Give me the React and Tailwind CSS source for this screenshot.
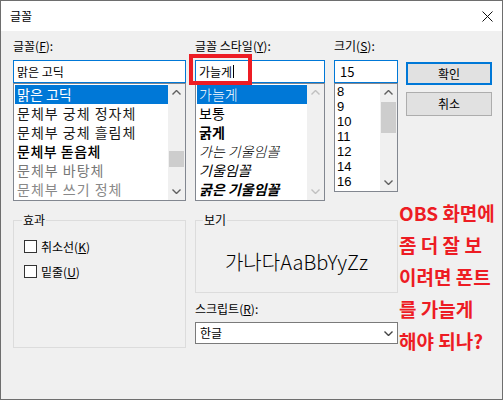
import React from 'react';

const font = { fontFamily: '"Noto Sans CJK KR", "Noto Sans", sans-serif' };

const Chevron = ({ dir = 'down', color = '#606060', w = 9, h = 5 }) => (
    <svg width={w} height={h} viewBox="0 0 9 5" fill="none">
        {dir === 'up' ? (
            <polyline points="0.5,4.5 4.5,0.5 8.5,4.5" stroke={color} strokeWidth="1.4" />
        ) : (
            <polyline points="0.5,0.5 4.5,4.5 8.5,0.5" stroke={color} strokeWidth="1.4" />
        )}
    </svg>
);

const ScrollBar = ({ thumbTop, thumbHeight, disabled }) => (
    <div className="w-[17px] flex flex-col bg-[#f0f0f0]">
        <div className="h-[17px] flex items-center justify-center">
            <Chevron dir="up" color={disabled ? '#c0c0c0' : '#606060'} />
        </div>
        <div className="flex-1 flex flex-col px-[1px]">
            {!disabled && (
                <div className="bg-[#cdcdcd]" style={{ marginTop: thumbTop, height: thumbHeight }} />
            )}
        </div>
        <div className="h-[17px] flex items-center justify-center">
            <Chevron dir="down" color={disabled ? '#c0c0c0' : '#606060'} />
        </div>
    </div>
);

const Label = ({ text, k, tail = ':' }) => (
    <div className="h-[15px] text-[12px] leading-[15px] text-black whitespace-nowrap">
        {text}(<span className="underline">{k}</span>){tail}
    </div>
);

const fontItems = [
    { t: '맑은 고딕', sel: true },
    { t: '문체부 궁체 정자체', c: 'text-[#1a1a1a] tracking-[1px]' },
    { t: '문체부 궁체 흘림체', c: 'text-[#1a1a1a] tracking-[1px]' },
    { t: '문체부 돋음체', c: 'text-black font-medium tracking-[0.5px]' },
    { t: '문체부 바탕체', c: 'text-[#777] tracking-[1px]' },
    { t: '문체부 쓰기 정체', c: 'text-[#888] tracking-[1px]' },
];

const styleItems = [
    { t: '가늘게', sel: true, c: 'font-light' },
    { t: '보통', c: '' },
    { t: '굵게', c: 'font-bold' },
    { t: '가는 기울임꼴', c: 'italic font-light' },
    { t: '기울임꼴', c: 'italic' },
    { t: '굵은 기울임꼴', c: 'italic font-bold' },
];

const sizes = ['8', '9', '10', '11', '12', '14', '16'];

export default function App() {
    return (
        <div className="w-[504px] h-[400px] bg-white" style={font}>
            <div className="relative w-[503px] h-[400px] border border-[#6e6e6e] flex flex-col bg-[#f0f0f0]">
                {/* title bar */}
                <div className="h-[30px] bg-white flex items-center justify-between pl-[9px] pr-[9px]">
                    <span className="text-[12px] text-black">글꼴</span>
                    <svg width="11" height="11" viewBox="0 0 11 11">
                        <path d="M0.5 0.5 L10.5 10.5 M10.5 0.5 L0.5 10.5" stroke="#111" strokeWidth="1" />
                    </svg>
                </div>

                <div className="flex-1 pl-[12px] pt-[7px]">
                    {/* top row */}
                    <div className="flex">
                        {/* font */}
                        <div className="w-[173px] flex flex-col">
                            <Label text="글꼴" k="F" />
                            <div className="mt-[7px] h-[23px] border border-[#0078d7] bg-white flex items-center pl-[3px] text-[12px] text-black">
                                맑은 고딕
                            </div>
                            <div className="h-[118px] border border-[#828790] bg-white flex">
                                <div className="flex-1 pl-[1px] pt-[1px] overflow-hidden">
                                    {fontItems.map(it => (
                                        <div
                                            key={it.t}
                                            className={`h-[19px] pl-[2px] text-[14px] leading-[19px] whitespace-nowrap ${it.sel ? 'bg-[#0078d7] text-white' : it.c}`}
                                        >
                                            {it.t}
                                        </div>
                                    ))}
                                </div>
                                <ScrollBar thumbTop={50} thumbHeight={16} />
                            </div>
                        </div>

                        {/* style */}
                        <div className="relative ml-[9px] w-[130px] flex flex-col">
                            <Label text="글꼴 스타일" k="Y" />
                            <div className="mt-[7px] h-[23px] border border-[#0078d7] bg-white flex items-center pl-[3px] text-[12px] text-black">
                                가늘게<span className="ml-[1px] w-[1px] h-[13px] bg-black" />
                            </div>
                            <div className="h-[118px] border border-[#828790] bg-white flex">
                                <div className="flex-1 pl-[1px] pt-[1px] overflow-hidden">
                                    {styleItems.map(it => (
                                        <div
                                            key={it.t}
                                            className={`h-[19px] pl-[2px] text-[14px] leading-[19px] whitespace-nowrap ${it.c} ${it.sel ? 'bg-[#0078d7] text-white' : 'text-black'}`}
                                        >
                                            {it.t}
                                        </div>
                                    ))}
                                </div>
                                <ScrollBar disabled />
                            </div>
                            {/* red annotation box */}
                            <div className="absolute left-[-6px] top-[16px] w-[63px] h-[31px] border-[4px] border-[#ed1c24]" />
                        </div>

                        {/* size */}
                        <div className="ml-[9px] w-[64px] flex flex-col">
                            <Label text="크기" k="S" />
                            <div className="mt-[7px] h-[23px] border border-[#0078d7] bg-white flex items-center pl-[5px] text-[13px] text-black">
                                15
                            </div>
                            <div className="h-[109px] border border-[#828790] bg-white flex">
                                <div className="flex-1 pl-[2px] overflow-hidden" style={{ fontFamily: '"Liberation Sans", Arial, sans-serif' }}>
                                    {sizes.map(s => (
                                        <div key={s} className="h-[15px] flex items-center text-[13px] leading-[13px] text-black">
                                            {s}
                                        </div>
                                    ))}
                                </div>
                                <ScrollBar thumbTop={1} thumbHeight={31} />
                            </div>
                        </div>

                        {/* buttons */}
                        <div className="ml-[8px] w-[86px] flex flex-col pt-[24px] gap-[7px]">
                            <div className="h-[23px] border-2 border-[#0078d7] bg-[#e1e1e1] flex items-center justify-center text-[12px] text-black">
                                확인
                            </div>
                            <div className="h-[24px] border border-[#adadad] bg-[#e1e1e1] flex items-center justify-center text-[12px] text-black">
                                취소
                            </div>
                        </div>
                    </div>

                    {/* bottom row */}
                    <div className="flex mt-[19px]">
                        {/* effects */}
                        <div className="relative w-[173px] h-[128px] border border-[#dcdcdc] pl-[10px] pt-[19px] flex flex-col gap-[12px]">
                            <span className="absolute -top-[9px] left-[8px] px-[1px] bg-[#f0f0f0] text-[12px] leading-[16px] text-black">효과</span>
                            <div className="flex items-center h-[13px]">
                                <div className="w-[13px] h-[13px] border border-[#333] bg-white" />
                                <span className="ml-[4px] text-[12px] text-black">취소선(<span className="underline">K</span>)</span>
                            </div>
                            <div className="flex items-center h-[13px]">
                                <div className="w-[13px] h-[13px] border border-[#333] bg-white" />
                                <span className="ml-[4px] text-[12px] text-black">밑줄(<span className="underline">U</span>)</span>
                            </div>
                        </div>

                        {/* preview + script */}
                        <div className="ml-[9px] w-[203px] flex flex-col">
                            <div className="relative h-[73px] border border-[#dcdcdc] flex items-center justify-center pt-[10px]">
                                <span className="absolute -top-[9px] left-[7px] px-[1px] bg-[#f0f0f0] text-[12px] leading-[16px] text-black">보기</span>
                                <span className="text-[20px] font-light text-black">가나다AaBbYyZz</span>
                            </div>
                            <div className="mt-[8px]">
                                <Label text="스크립트" k="R" />
                            </div>
                            <div className="mt-[6px] h-[22px] border border-[#7a7a7a] bg-white flex items-center justify-between pl-[4px] pr-[4px] text-[12px] text-black">
                                한글
                                <Chevron dir="down" color="#444" />
                            </div>
                        </div>
                    </div>
                </div>

                {/* red annotation text */}
                <div className="absolute left-[398px] top-[196px] flex flex-col text-[19px] leading-[32px] font-bold text-[#ed1c24] whitespace-nowrap">
                    <span>OBS 화면에</span>
                    <span>좀 더 잘 보</span>
                    <span>이려면 폰트</span>
                    <span>를 가늘게</span>
                    <span>해야 되나?</span>
                </div>
            </div>
        </div>
    );
}
